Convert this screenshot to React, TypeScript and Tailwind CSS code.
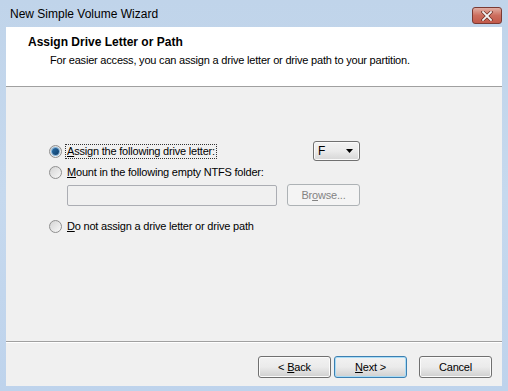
import React from "react";

const Radio = ({ checked }: { checked?: boolean }) => (
  <span className="relative inline-block w-[13px] h-[13px] rounded-full border border-[#8f8f8f] bg-gradient-to-br from-[#d4d4d4] to-[#f8f8f8] shrink-0">
    {checked && (
      <span className="absolute left-[2px] top-[2px] w-[7px] h-[7px] rounded-full bg-gradient-to-br from-[#2a6fa8] to-[#0b3b68] shadow-[0_0_0_1px_#7fb1da]" />
    )}
  </span>
);

const Btn = ({ children, def, w = "w-[73px]", disabled }: { children: React.ReactNode; def?: boolean; w?: string; disabled?: boolean }) => (
  <div
    className={`${w} h-[22px] rounded-[3px] border flex items-center justify-center ${
      def ? "border-[#3c7fb1] shadow-[inset_0_0_0_1px_#a9dcf6]" : disabled ? "border-[#adb2b5]" : "border-[#707070] shadow-[inset_0_0_0_1px_#fbfbfb]"
    } ${disabled ? "bg-[#f4f4f4] text-[#838383]" : "bg-gradient-to-b from-[#f2f2f2] via-[#ebebeb] to-[#cfcfcf]"}`}
  >
    <span className="whitespace-pre">{children}</span>
  </div>
);

export default function App() {
  return (
    <div
      className="w-[508px] h-[391px] bg-gradient-to-b from-[#c0d4ea] via-[#c6d9ee] to-[#bed3ec] flex flex-col"
      style={{ fontFamily: '"Liberation Sans", Arial, sans-serif' }}
    >
      <div className="h-[27px] flex items-start justify-between pl-[10px] pr-[6px] shrink-0">
        <span className="text-[12px] text-black mt-[7px] leading-[14px]">
          New Simple Volume Wizard
        </span>
        <div className="w-[30px] h-[17px] mt-[7px] rounded-[3px] border border-[#7a3a33] bg-gradient-to-b from-[#e0aea4] via-[#cc6e5e] to-[#c2594a] flex items-center justify-center">
          <svg width="12" height="10" viewBox="0 0 12 10">
            <path d="M2 1 L10 9 M10 1 L2 9" stroke="#6a2a20" strokeWidth="3.2" strokeLinecap="square" />
            <path d="M2 1 L10 9 M10 1 L2 9" stroke="#f4f4f4" strokeWidth="1.8" strokeLinecap="square" />
          </svg>
        </div>
      </div>
      <div className="mx-[6px] flex-1 flex flex-col bg-[#f0f0f0] mb-[5px] text-[11px] tracking-[-0.2px] text-black">
        <div className="h-[60px] bg-white border-b border-[#a0a0a0] pl-[22px] pt-[8px] shrink-0">
          <div className="font-bold text-[12px] tracking-normal leading-[15px]">Assign Drive Letter or Path</div>
          <div className="pl-[22px] mt-[3px] leading-[14px]">
            For easier access, you can assign a drive letter or drive path to your partition.
          </div>
        </div>
        <div className="flex-1 border-b border-[#a0a0a0] relative">
          <div className="absolute inset-x-0 bottom-[-2px] h-px bg-white" />
          <div className="pl-[43px] pt-[55px] pr-[142px]">
            <div className="flex items-center h-[18px] justify-between">
              <div className="flex items-center gap-[4px]">
                <Radio checked />
                <span className="outline-1 outline-dotted outline-[#333] px-[1px] leading-[13px]">
                  <u>A</u>ssign the following drive letter:
                </span>
              </div>
              <div className="w-[47px] h-[20px] border border-[#707070] rounded-[3px] bg-gradient-to-b from-[#f2f2f2] via-[#ebebeb] to-[#d6d6d6] flex items-center justify-between px-[4px] shadow-[inset_0_0_0_1px_#fafafa]">
                <span className="text-[12px]">F</span>
                <svg width="7" height="4" viewBox="0 0 7 4" className="mr-[2px]"><path d="M0 0 H7 L3.5 4 Z" fill="#000" /></svg>
              </div>
            </div>
            <div className="flex items-center h-[16px] mt-[4px] gap-[4px]">
              <Radio />
              <span className="pl-[1px]"><u>M</u>ount in the following empty NTFS folder:</span>
            </div>
            <div className="flex items-center mt-[4px] pl-[18px] gap-[10px]">
              <div className="w-[210px] h-[21px] border border-[#abadb3] bg-[#f0f0f0] rounded-[2px]" />
              <Btn disabled>
                Br<u>o</u>wse...
              </Btn>
            </div>
            <div className="flex items-center h-[16px] mt-[12px] gap-[4px]">
              <Radio />
              <span className="pl-[1px]"><u>D</u>o not assign a drive letter or drive path</span>
            </div>
          </div>
        </div>
        <div className="h-[44px] flex items-center justify-end pr-[10px] shrink-0 pt-[6px]">
          <Btn>
            {"< "}<u>B</u>ack
          </Btn>
          <div className="w-[3px]" />
          <Btn def>
            <u>N</u>ext{" >"}
          </Btn>
          <div className="w-[12px]" />
          <Btn>Cancel</Btn>
        </div>
      </div>
    </div>
  );
}
